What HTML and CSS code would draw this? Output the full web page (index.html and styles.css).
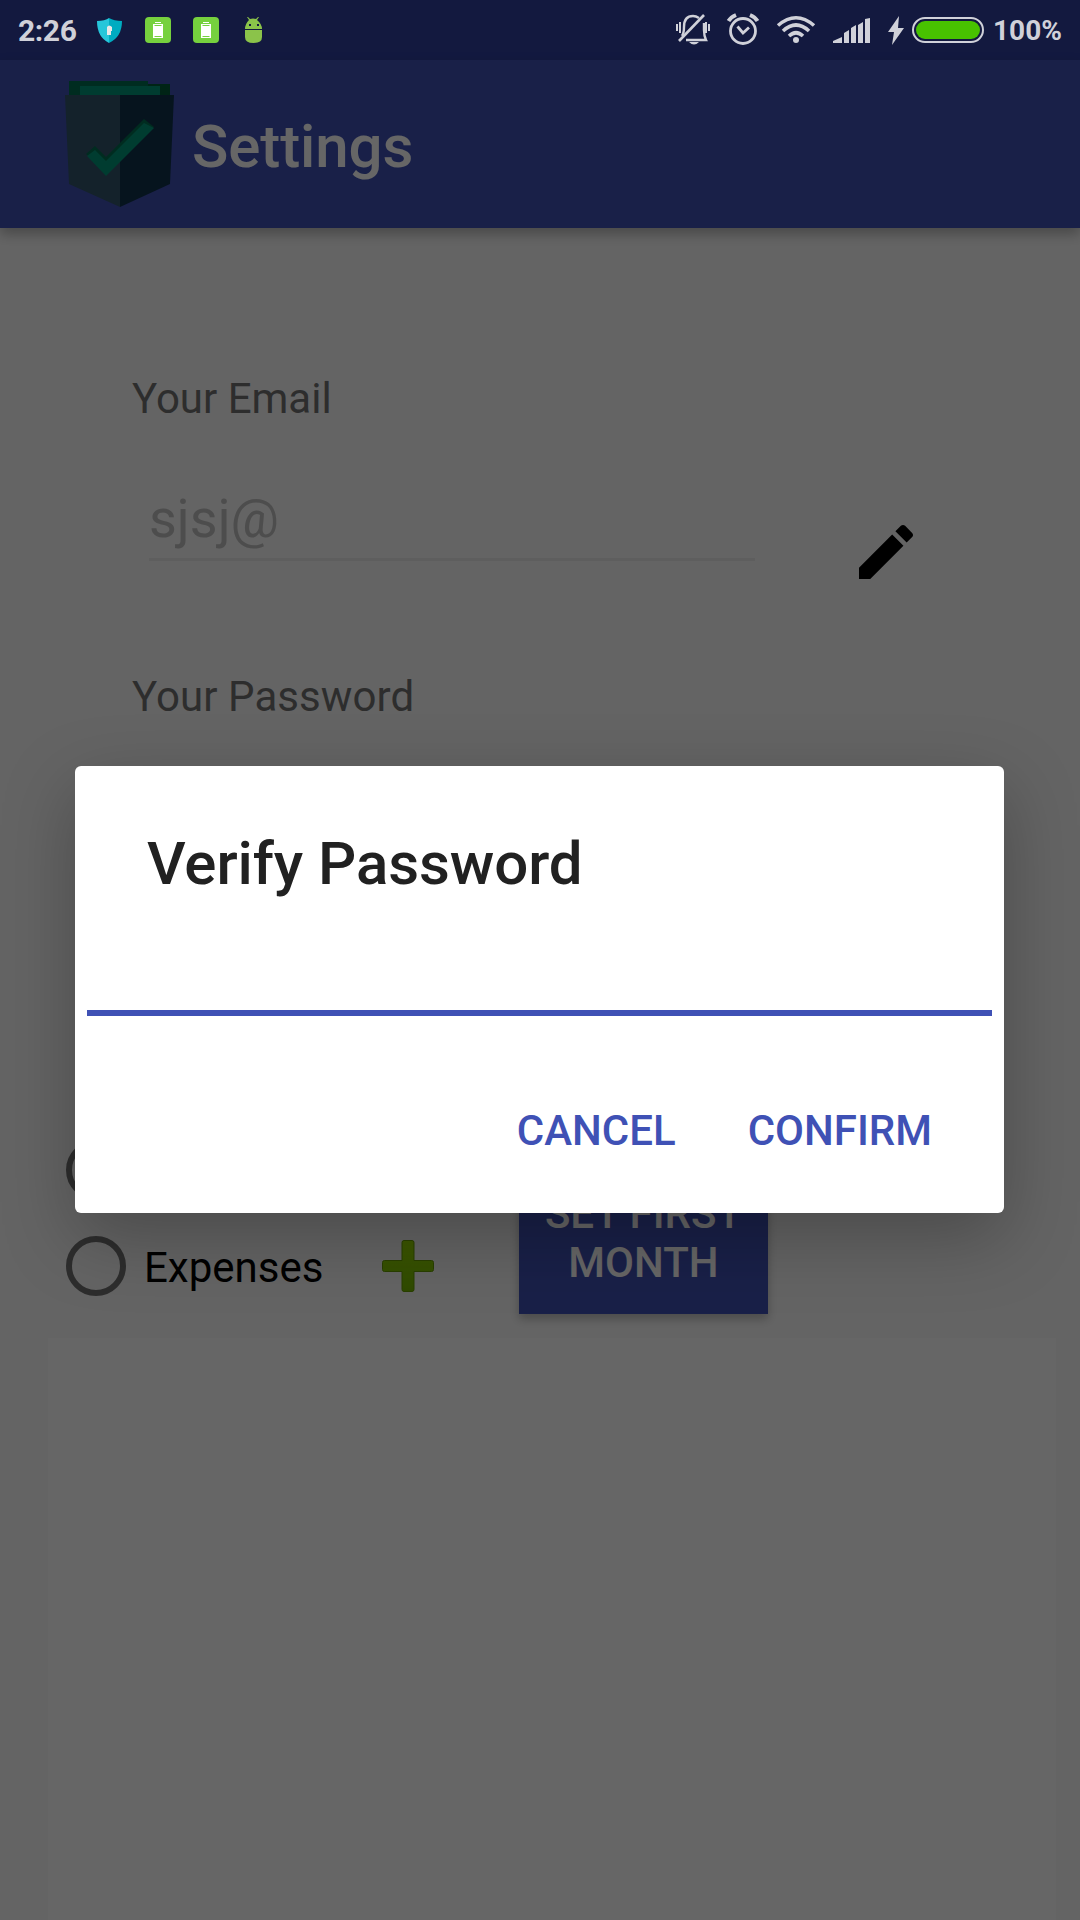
FILE: index.html
```html
<!DOCTYPE html>
<html lang="en">
<head>
<meta charset="utf-8">
<title>Settings</title>
<link rel="stylesheet" href="styles.css">
</head>
<body>
<div class="screen">
  <div class="app">
    <div class="status-space"></div>
    <header class="app-bar">
      <svg class="logo" viewBox="0 0 109 126" width="109" height="126">
        <path fill="#006e50" d="M4 0H83V3H105V14H4z"/>
        <path fill="#005a38" d="M83 3H105V14H95V5H83z"/>
        <path fill="#009678" d="M15 5H95V14H15z"/>
        <path fill="#34556b" d="M0 14H55V126L4 103z"/>
        <path fill="#11324c" d="M55 14H109L105 103L55 126z"/>
        <path fill="#006e50" d="M21 73L30 65L41 76L79 38L89 46L41 88z"/>
        <path fill="#009678" d="M22 75L30 69L41 80L79 42L89 47L41 95z"/>
      </svg>
      <h1 class="app-title">Settings</h1>
    </header>
    <main class="content">
      <section class="account">
        <p class="label">Your Email</p>
        <div class="email-row">
          <div class="field">sjsj@</div>
          <svg class="pencil" viewBox="0 0 24 24" width="72" height="72"><path d="M3 17.25V21h3.75L17.81 9.94l-3.75-3.75L3 17.25zM20.71 7.04c.39-.39.39-1.02 0-1.41l-2.34-2.34c-.39-.39-1.02-.39-1.41 0l-1.83 1.83 3.75 3.75 1.83-1.83z"/></svg>
        </div>
        <p class="label password-label">Your Password</p>
      </section>
      <section class="options">
        <div class="radios">
          <span class="radio"></span>
          <div class="radio-row"><span class="radio"></span><span class="radio-label">Expenses</span></div>
        </div>
        <svg class="plus" viewBox="0 0 52 52" width="52" height="52">
          <defs><linearGradient id="green" x1="0" y1="0" x2="0" y2="1"><stop offset="0" stop-color="#98d900"/><stop offset="1" stop-color="#75b900"/></linearGradient></defs>
          <path fill="url(#green)" stroke="#669d00" stroke-width="1" d="M22 .5h8q2 0 2 2v18h17.500q2 0 2 2v7q0 2-2 2H32v18q0 2-2 2h-8q-2 0-2-2V31.500H2.500q-2 0-2-2v-7q0-2 2-2h17.500V2.500q0-2 2-2z"/>
        </svg>
        <div class="month-button">SET FIRST<br>MONTH</div>
      </section>
      <section class="list"></section>
    </main>
  </div>

  <div class="scrim">
    <div class="status-bar">
      <span class="clock">2:26</span>
      <svg class="notes" width="180" height="60" viewBox="0 0 180 60">
        <path fill="#26c6da" d="M1 21Q9 21 13 18V43Q1 37 1 21z"/>
        <path fill="#00acc1" d="M13 18Q18 21 26 21Q26 37 13 43z"/>
        <path fill="#e8e8e8" d="M11 27Q13 24 16 27L16 31H15V35H11V31H11z"/>
        <g id="battery-note">
          <rect x="49" y="17" width="26" height="26" rx="4" fill="#76d13e"/>
          <path fill="#fff" d="M59 22h6v1h-6zM57 24h10v14H57z"/>
          <path fill="none" stroke="#76d13e" d="M58.500 25.500h7M58.500 36.500h7"/>
        </g>
        <use href="#battery-note" x="48"/>
        <g fill="#8bc34a">
          <path d="M149 29Q149 24 153 20L151 17L152 17L154 19Q157 18 160 19L162 17L163 17L161 20Q166 24 166 29z"/>
          <path d="M149 30H166V37Q166 43 157.500 43Q149 43 149 37z"/>
        </g>
        <path fill="#141941" d="M153 24h2v2h-2zM161 24h2v2h-2z"/>
      </svg>
      <svg class="system" width="316" height="60" viewBox="670 0 316 60" fill="none" stroke="#d0d1d9">
        <g stroke-width="2.400">
          <path d="M682 36Q684 33 684 27Q684 16 693 16Q696 16 699 18M704 23V30Q704 36 706 40H686"/>
          <path d="M679 41L704 15" stroke-width="2.600"/>
          <path d="M677 24v7M680 22v11M706 22v11M709 24v7" stroke-width="2"/>
          <path d="M689 42h10q-5 5-10 0z" fill="#d0d1d9" stroke="none"/>
        </g>
        <circle cx="743" cy="31" r="12.500" stroke-width="2.800"/>
        <path d="M737.500 26.500L743 33L749 27.500" stroke-width="2.800"/>
        <path d="M728.500 21Q731 17 736 15M757.500 21Q755 17 750 15" stroke-width="4"/>
        <g stroke-width="3.600">
          <path d="M778 25.500Q796 10 814 25.500M783 31Q796 19 809 31M789 36Q796 29.500 803 36"/>
        </g>
        <circle cx="796" cy="40" r="3" fill="#d0d1d9" stroke="none"/>
        <path fill="#d0d1d9" stroke="none" d="M833 43v-2l9-4v6zM844 43V33l5-3v13zM851 43V28l5-3v18zM858 43V25l5-3v21zM865 43V19l5-1v25z"/>
        <path fill="#d0d1d9" stroke="none" d="M899 16L888 32H894L892 45L904 28H898z"/>
        <rect x="913" y="18" width="70" height="24" rx="12" stroke-width="2"/>
        <rect x="916" y="21" width="64" height="18" rx="9" fill="#48c200" stroke="none"/>
      </svg>
      <span class="percent">100%</span>
    </div>
    <div class="dialog">
      <h2 class="dialog-title">Verify Password</h2>
      <div class="password-input"></div>
      <div class="actions"><span class="cancel">CANCEL</span><span class="confirm">CONFIRM</span></div>
    </div>
  </div>
</div>
</body>
</html>
```
FILE: styles.css
```css
* { box-sizing: border-box; }
body, h1, h2, p { margin: 0; }
body { font-family: Roboto, sans-serif; font-size: 42px; }
svg { display: block; flex: none; }

.screen { position: relative; width: 1080px; height: 1920px; overflow: hidden; }
.app { height: 1920px; display: flex; flex-direction: column; background: #fafafa; isolation: isolate; }
.status-space { height: 60px; background: #303f9f; }
.app-bar {
  height: 168px; padding: 21px 0 0 65px; display: flex; gap: 18px;
  background: #3f51b5; box-shadow: 0 6px 12px rgba(0, 0, 0, .28); z-index: 1;
}
.app-title { font-size: 60px; font-weight: 500; line-height: 70px; margin-top: 31px; color: #fff; letter-spacing: -.1px; }

.content { flex: 1; display: flex; flex-direction: column; }
.account { height: 908px; padding: 146px 0 0 132px; }
.label { line-height: 49px; color: #727272; }
.password-label { letter-spacing: .08px; }
.email-row { display: flex; gap: 95px; padding: 60px 0 0 17px; height: 249px; }
.field {
  width: 606px; height: 78px; line-height: 63px; padding: 4px 0 0;
  font-size: 54px; color: #c1c1c1; border-bottom: 3px solid #ececec;
}
.pencil { margin-top: 33px; }

.options { display: flex; height: 202px; padding-left: 66px; }
.radios { width: 316px; display: flex; flex-direction: column; gap: 36px; padding-top: 4px; }
.radio { width: 60px; height: 60px; border: 6px solid #727272; border-radius: 50%; flex: none; }
.radio-row { display: flex; align-items: center; gap: 18px; }
.radio-label { line-height: 49px; padding-top: 3px; }
.plus { margin-top: 104px; }
.month-button {
  width: 249px; height: 160px; margin: 18px 0 0 85px; padding-top: 35px;
  background: #3f51b5; color: #fff; font-weight: 500; line-height: 49px; text-align: center;
  box-shadow: 0 5px 9px rgba(0, 0, 0, .25);
}
.list { flex: 1; margin: 0 24px 0 48px; background: #fff; }

.scrim {
  position: absolute; inset: 0; background: rgba(0, 0, 0, .6);
  display: flex; flex-direction: column;
}
.status-bar { height: 60px; display: flex; align-items: center; color: #d0d1d9; white-space: nowrap; }
.clock { width: 96px; padding-left: 18px; font-size: 30px; font-weight: 700; letter-spacing: -.4px; }
.system { margin-left: 394px; }
.percent { margin-left: 7px; font-size: 28px; font-weight: 700; }

.dialog {
  width: 929px; height: 447px; margin: 706px 0 0 75px; padding: 63px 12px 0;
  background: #fff; border-radius: 6px; box-shadow: 0 24px 72px rgba(0, 0, 0, .26);
}
.dialog-title { padding-left: 60px; font-size: 60px; font-weight: 500; line-height: 70px; color: #212121; letter-spacing: -.08px; }
.password-input { height: 122px; margin-bottom: 90px; margin-top: -5px; border-bottom: 6px solid #3f51b5; }
.actions {
  display: flex; justify-content: flex-end; gap: 72px; padding-right: 60px;
  color: #3f51b5; font-weight: 500; line-height: 49px;
}
```
